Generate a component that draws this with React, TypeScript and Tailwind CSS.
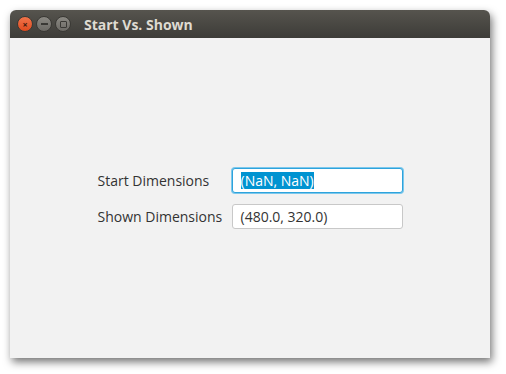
export default function App() {
  return (
    <div className="w-[506px] h-[374px] bg-white pt-[10px] pl-[10px]" style={{ fontFamily: '"Open Sans", "DejaVu Sans", sans-serif' }}>
      <div className="w-[480px] h-[348px] flex flex-col rounded-t-[6px] shadow-[2px_4px_8px_rgba(0,0,0,0.55)]">
        <div className="h-[28px] flex items-center rounded-t-[6px] bg-gradient-to-b from-[#56544e] to-[#3d3c38] pl-[7px]">
          <div className="flex items-center gap-[3px]">
            <span className="w-[16px] h-[16px] rounded-full bg-gradient-to-b from-[#f0744a] to-[#df4a1c] border border-[#3a3935] flex items-center justify-center text-[#3b1a0e] text-[9px] leading-none font-bold">×</span>
            <span className="w-[16px] h-[16px] rounded-full bg-gradient-to-b from-[#8b8983] to-[#6c6a65] border border-[#3a3935] flex items-center justify-center">
              <span className="w-[7px] h-[1.5px] bg-[#3a3935]" />
            </span>
            <span className="w-[16px] h-[16px] rounded-full bg-gradient-to-b from-[#8b8983] to-[#6c6a65] border border-[#3a3935] flex items-center justify-center">
              <span className="w-[7px] h-[7px] border border-[#3a3935] rounded-[1px]" />
            </span>
          </div>
          <span className="ml-[13px] text-[14px] font-bold text-[#dfdbd2] pt-[1px]">Start Vs. Shown</span>
        </div>
        <div className="flex-1 bg-[#f2f2f2] flex items-center justify-center">
          <div className="grid grid-cols-[126px_171px] gap-x-[8px] gap-y-[11px] items-center text-[14px] text-[#333] whitespace-nowrap">
            <div>Start Dimensions</div>
            <div className="h-[25px] rounded-[3px] border border-[#2ea3dc] shadow-[0_0_0_1px_#7cc8ec] bg-white flex items-center px-[8px]">
              <span className="bg-[#0093d1] text-white leading-[17px]">(NaN, NaN)</span>
            </div>
            <div>Shown Dimensions</div>
            <div className="h-[25px] rounded-[3px] border border-[#c8c8c8] bg-white flex items-center px-[8px]">
              (480.0, 320.0)
            </div>
          </div>
        </div>
      </div>
    </div>
  );
}
